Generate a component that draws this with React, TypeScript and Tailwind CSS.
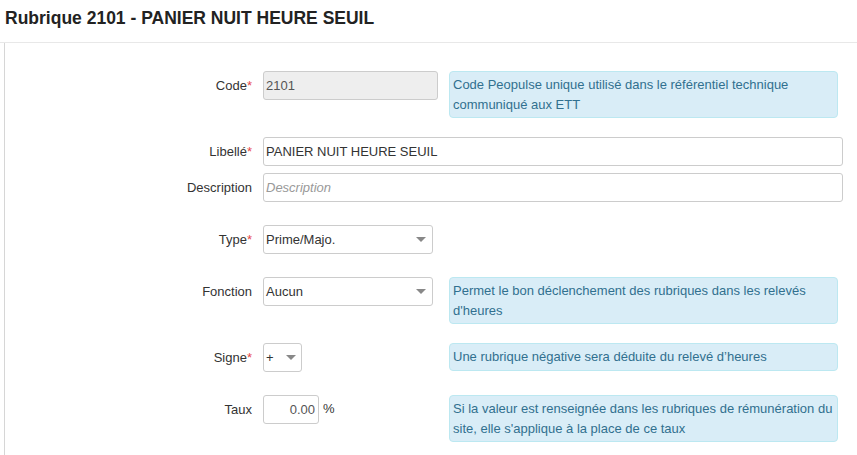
import React from 'react';

const font = { fontFamily: '"Liberation Sans", Arial, sans-serif' };

const Req = () => <span className="text-[13px] text-[#e8484a]">*</span>;

const Label: React.FC<{ text: string; required?: boolean }> = ({ text, required }) => (
  <div className="w-[247px] shrink-0 text-right text-[13px] leading-[29px] text-[#333]">
    {text}
    {required && <Req />}
  </div>
);

const Info: React.FC<{ children: React.ReactNode; single?: boolean }> = ({ children, single }) => (
  <div
    className={`w-[389px] shrink-0 rounded-[4px] border border-[#bce8f1] bg-[#d9edf7] px-[3px] pt-[3px] text-[13px] leading-[20px] text-[#31708f] ${
      single ? 'pb-[3px]' : 'pb-[2px]'
    }`}
  >
    {children}
  </div>
);

const Caret = () => (
  <svg width="10" height="5" viewBox="0 0 10 5" className="shrink-0">
    <path d="M0 0 L10 0 L5 5 Z" fill="#888" />
  </svg>
);

const FakeSelect: React.FC<{ value: string; className: string }> = ({ value, className }) => (
  <div
    className={`flex h-[29px] items-center justify-between rounded-[3px] border border-[#ccc] bg-white pl-[2px] text-[13px] text-[#333] ${className}`}
  >
    <span>{value}</span>
    <Caret />
  </div>
);

export default function App() {
  return (
    <div className="min-h-[455px] w-[857px] bg-white" style={font}>
      <div className="h-[43px] border-b border-[#e8e8e8] pl-[5px] pt-[8px]">
        <h1 className="text-[17.5px] font-bold leading-[20px] text-[#222]">
          Rubrique 2101 - PANIER NUIT HEURE SEUIL
        </h1>
      </div>
      <div className="ml-[4px] min-h-[412px] border-l border-[#d6d6d6] pt-[28px]">
        {/* Code */}
        <div className="flex items-start">
          <Label text="Code" required />
          <div className="ml-[11px] w-[186px] shrink-0">
            <input
              readOnly
              value="2101"
              className="h-[29px] w-[175px] rounded-[3px] border border-[#ccc] bg-[#eee] pl-[2px] text-[13px] text-[#555] outline-none"
            />
          </div>
          <Info>Code Peopulse unique utilisé dans le référentiel technique communiqué aux ETT</Info>
        </div>

        {/* Libellé */}
        <div className="mt-[19px] flex items-start">
          <Label text="Libellé" required />
          <input
            readOnly
            value="PANIER NUIT HEURE SEUIL"
            className="ml-[11px] h-[29px] w-[580px] rounded-[3px] border border-[#ccc] bg-white pl-[2px] text-[13px] text-[#333] outline-none"
          />
        </div>

        {/* Description */}
        <div className="mt-[7px] flex items-start">
          <Label text="Description" />
          <input
            readOnly
            placeholder="Description"
            className="ml-[11px] h-[29px] w-[580px] rounded-[3px] border border-[#ccc] bg-white pl-[2px] text-[13px] text-[#333] outline-none placeholder:italic placeholder:text-[#999]"
          />
        </div>

        {/* Type */}
        <div className="mt-[23px] flex items-start">
          <Label text="Type" required />
          <FakeSelect value="Prime/Majo." className="ml-[11px] w-[170px] pr-[6px]" />
        </div>

        {/* Fonction */}
        <div className="mt-[23px] flex items-start">
          <Label text="Fonction" />
          <div className="ml-[11px] w-[186px] shrink-0">
            <FakeSelect value="Aucun" className="w-[170px] pr-[6px]" />
          </div>
          <Info>Permet le bon déclenchement des rubriques dans les relevés d'heures</Info>
        </div>

        {/* Signe */}
        <div className="mt-[19px] flex items-start">
          <Label text="Signe" required />
          <div className="ml-[11px] w-[186px] shrink-0">
            <FakeSelect value="+" className="w-[39px] pr-[5px]" />
          </div>
          <Info single>Une rubrique négative sera déduite du relevé d’heures</Info>
        </div>

        {/* Taux */}
        <div className="mt-[23px] flex items-start">
          <Label text="Taux" />
          <div className="ml-[11px] flex w-[186px] shrink-0 items-start">
            <input
              readOnly
              value="0.00"
              className="h-[29px] w-[56px] rounded-[3px] border border-[#ccc] bg-white pr-[3px] text-right text-[13px] text-[#555] outline-none"
            />
            <span className="ml-[4px] -mt-[1px] text-[13px] leading-[29px] text-[#333]">%</span>
          </div>
          <Info>Si la valeur est renseignée dans les rubriques de rémunération du site, elle s'applique à la place de ce taux</Info>
        </div>
      </div>
    </div>
  );
}
